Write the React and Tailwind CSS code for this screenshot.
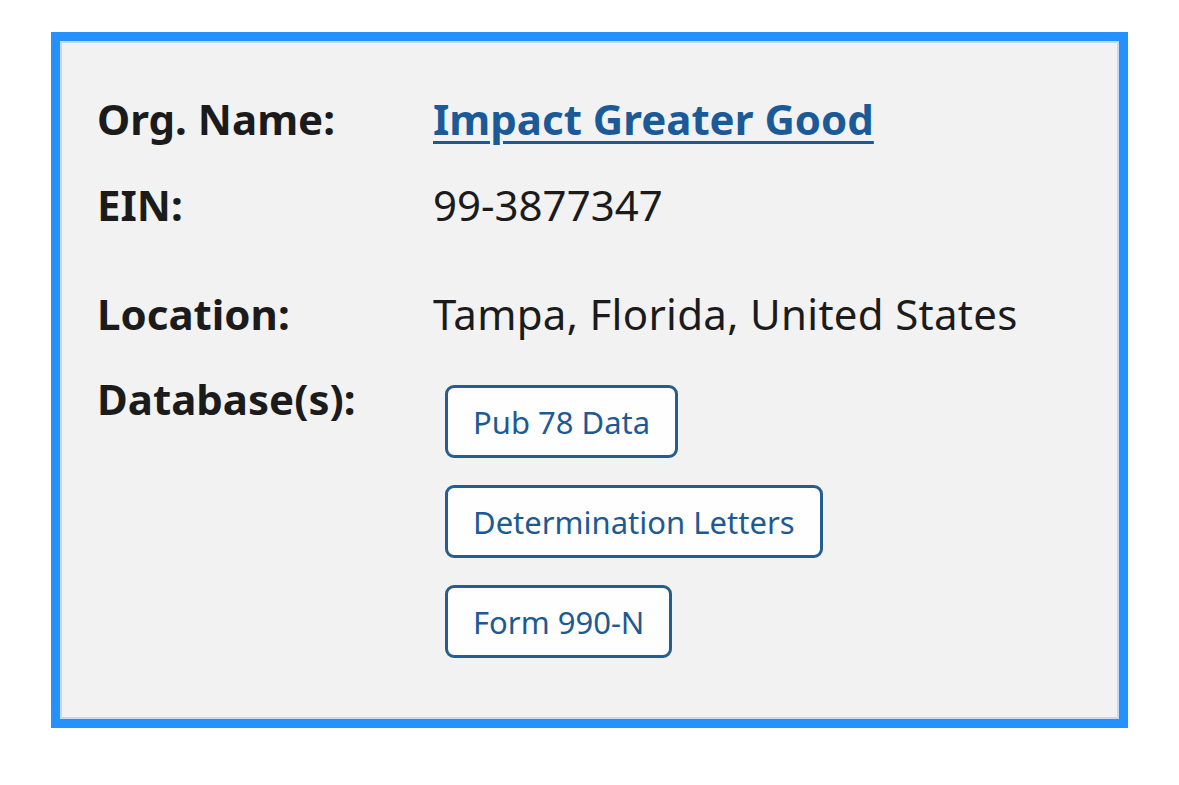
import React from 'react';

const databases = ['Pub 78 Data', 'Determination Letters', 'Form 990-N'];

export default function App() {
  return (
    <div className="min-h-screen bg-white pt-[32px] pl-[51px]" style={{ fontFamily: '"Noto Sans", "Open Sans", sans-serif' }}>
      <div className="w-[1077px] border-[9px] border-[#2491ff] bg-[#f2f2f2] shadow-[inset_0_0_0_2px_#c4d8f0]">
        <div className="pl-[37px] pt-[50px] pb-[61px] text-[#1b1b1b] text-[42px] leading-[56px]">

          {/* Org name */}
          <div className="flex">
            <div className="w-[336px] font-bold">Org. Name:</div>
            <a href="#" className="font-bold text-[#1a5a98] underline decoration-[3px] underline-offset-[6px]">
              Impact Greater Good
            </a>
          </div>

          {/* EIN */}
          <div className="flex mt-[30px]">
            <div className="w-[336px] font-bold">EIN:</div>
            <div>99-3877347</div>
          </div>

          {/* Location */}
          <div className="flex mt-[53px]">
            <div className="w-[336px] font-bold">Location:</div>
            <div className="tracking-[0.3px]">Tampa, Florida, United States</div>
          </div>

          {/* Databases */}
          <div className="flex mt-[29px]">
            <div className="w-[336px] font-bold">Database(s):</div>
            <div className="flex flex-col items-start gap-[27px] mt-[14px] ml-[12px]">
              {databases.map((d) => (
                <span
                  key={d}
                  className="h-[73px] flex items-center px-[25px] bg-[#fefefe] border-[3px] border-[#255c91] rounded-[9px] text-[31px] text-[#1d5a93]"
                >
                  {d}
                </span>
              ))}
            </div>
          </div>

        </div>
      </div>
    </div>
  );
}
